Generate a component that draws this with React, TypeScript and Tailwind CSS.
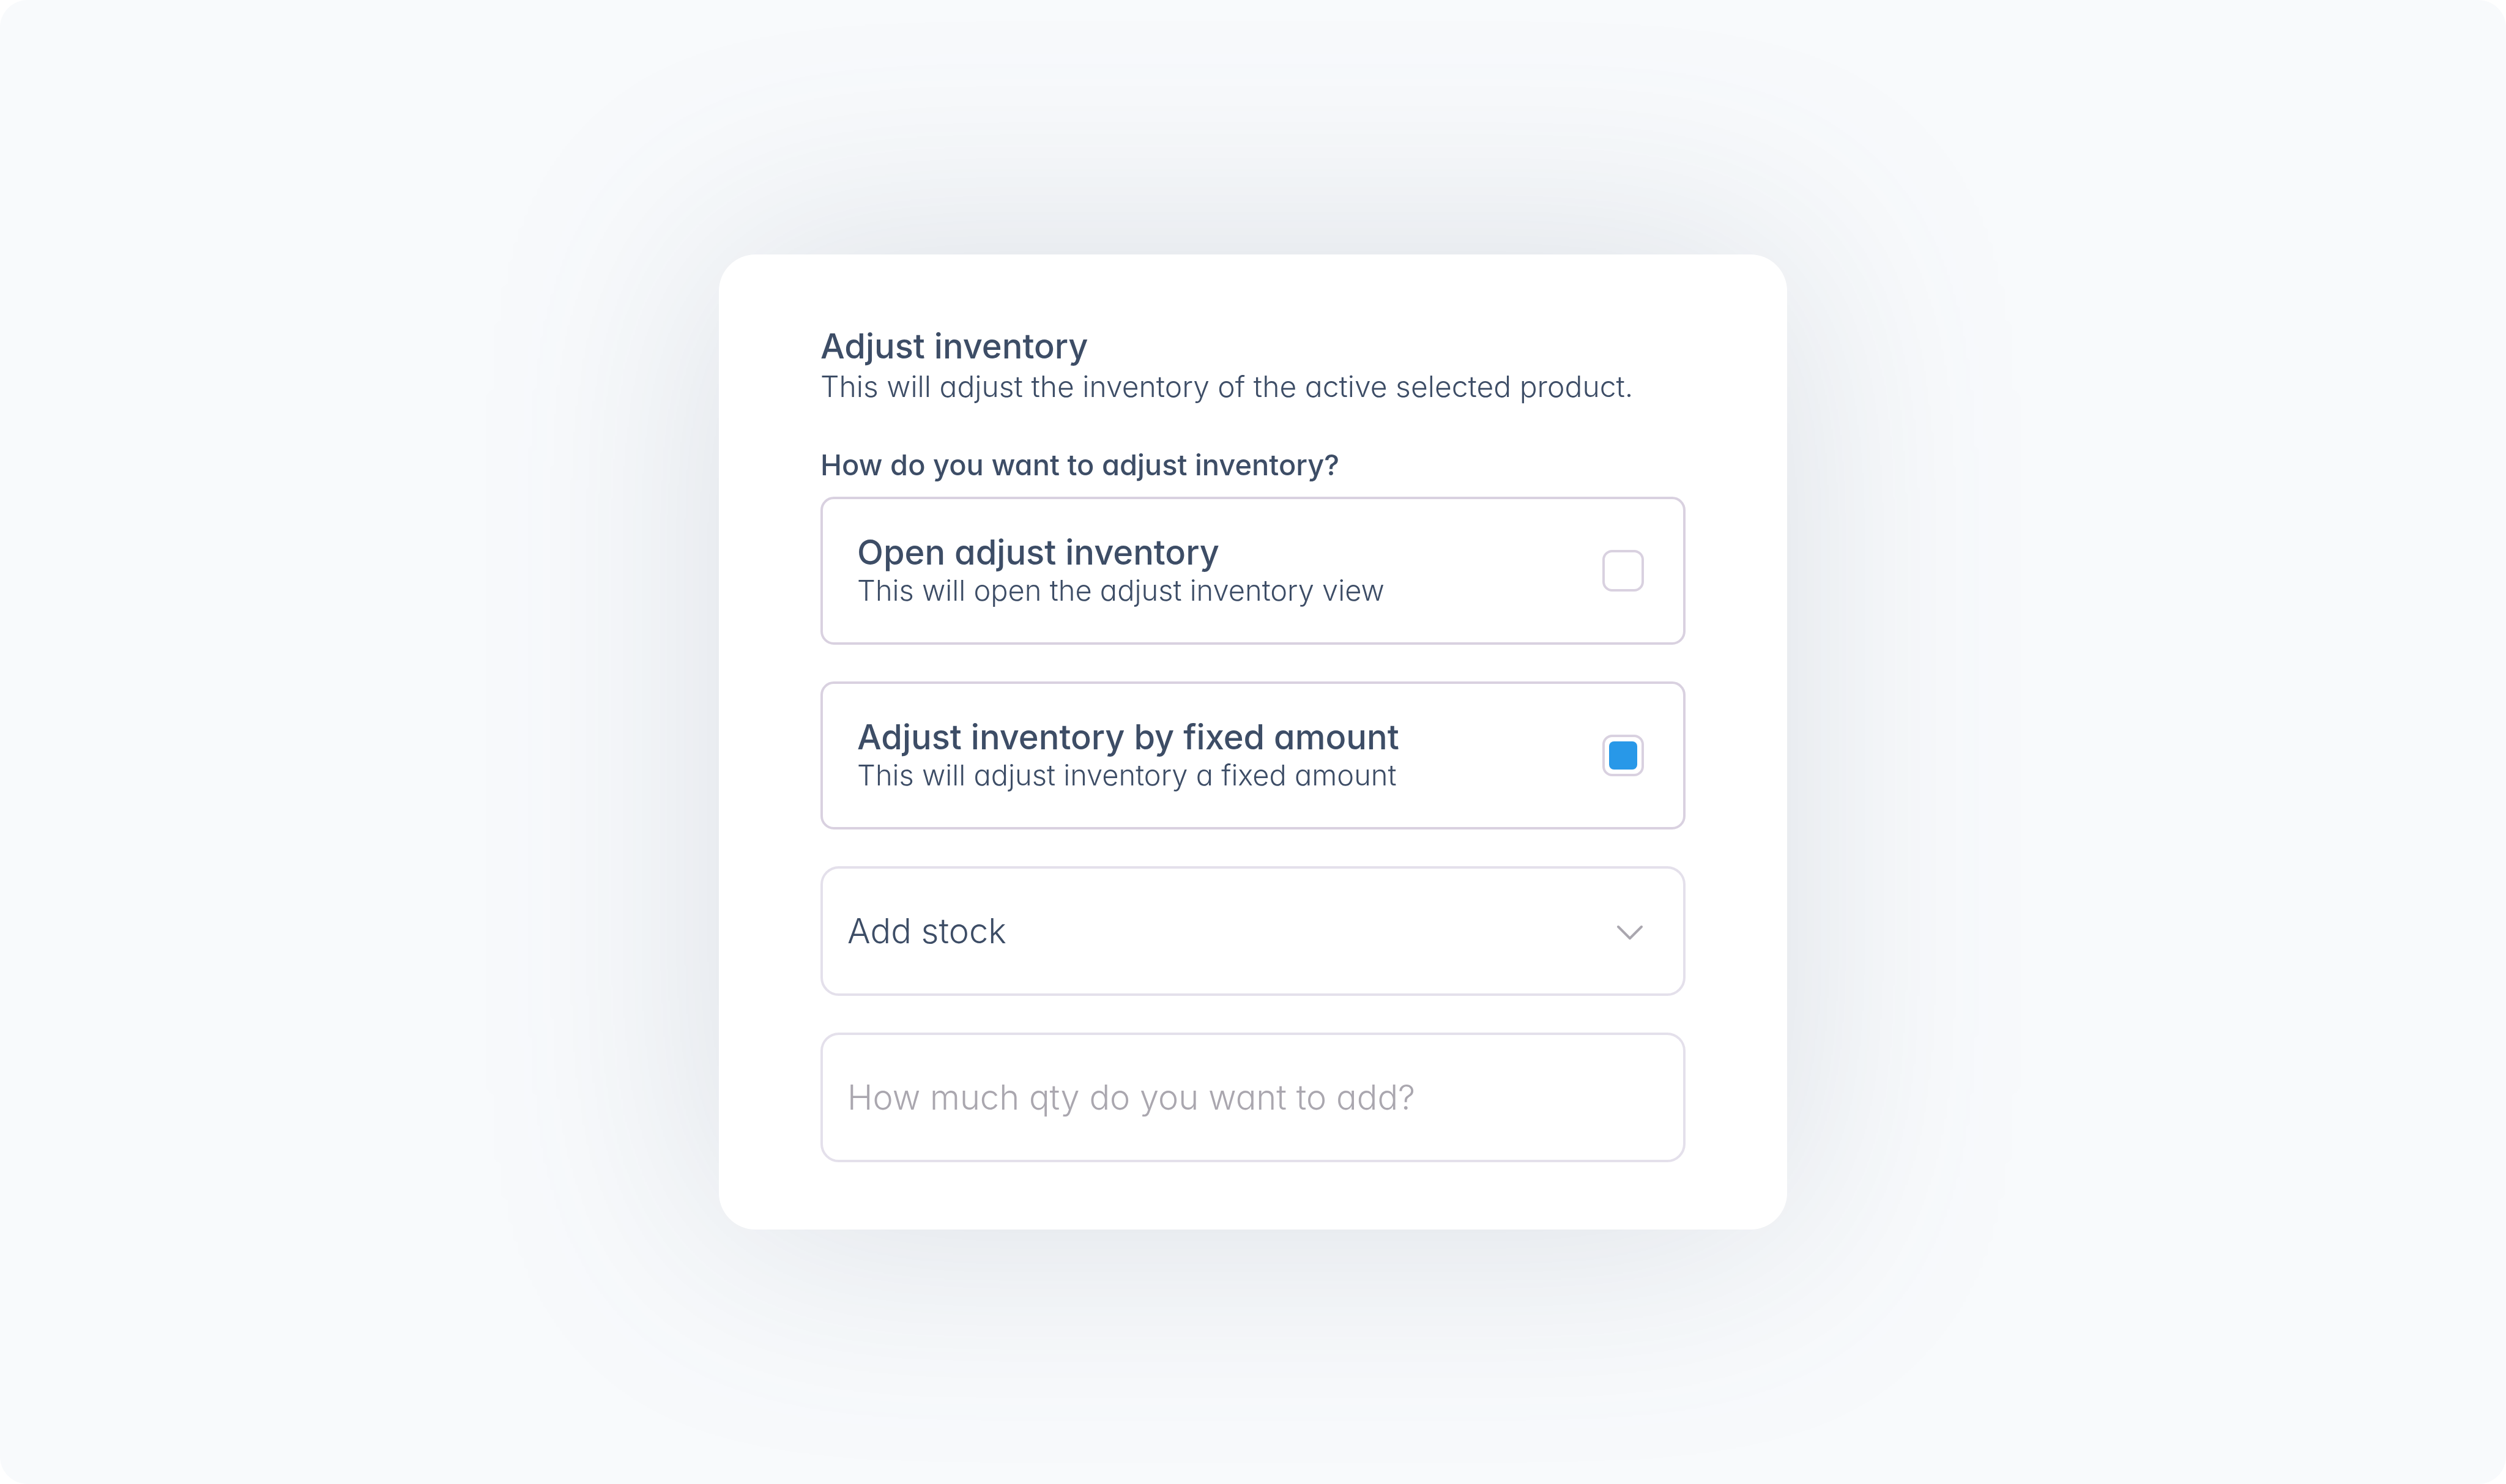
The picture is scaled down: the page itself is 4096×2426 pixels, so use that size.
import { useState } from 'react'

interface Option {
  id: string
  title: string
  description: string
}

const options: Option[] = [
  {
    id: 'open',
    title: 'Open adjust inventory',
    description: 'This will open the adjust inventory view',
  },
  {
    id: 'fixed',
    title: 'Adjust inventory by fixed amount',
    description: 'This will adjust inventory a fixed amount',
  },
]

interface OptionCardProps {
  option: Option
  checked: boolean
  onSelect: () => void
}

function OptionCard({ option, checked, onSelect }: OptionCardProps) {
  return (
    <label
      htmlFor={option.id}
      className="flex h-[242px] cursor-pointer items-center justify-between rounded-[22px] border-4 border-[#d9d1e0] pr-16 pl-14"
    >
      <span className="flex flex-col">
        <span className="text-[56px] leading-[64px] font-medium">{option.title}</span>
        <span className="text-[47px] leading-[60px] font-light">{option.description}</span>
      </span>
      <input
        id={option.id}
        type="checkbox"
        checked={checked}
        onChange={onSelect}
        className="grid size-[68px] shrink-0 appearance-none place-content-center rounded-2xl border-4 border-[#d9d1e0] checked:before:size-[46px] checked:before:rounded-lg checked:before:bg-[#2898e8] checked:before:content-['']"
      />
    </label>
  )
}

export default function App() {
  const [selected, setSelected] = useState('fixed')
  const [quantity, setQuantity] = useState('')

  return (
    <div className="bg-white font-['Inter',sans-serif] text-[#3d4d66] [font-feature-settings:'cv11']">
      <main className="flex min-h-screen items-center justify-center overflow-hidden rounded-[45px] bg-[#f8fafc]">
        <form className="w-full max-w-[1746px] rounded-[60px] bg-white px-[166px] pt-[120px] pb-[110px] drop-shadow-[0_0_190px_rgba(60,77,102,0.15)]">
          <h1 className="text-[56px] leading-[60px] font-medium">Adjust inventory</h1>
          <p className="mt-1 text-[48px] leading-[64px] font-light whitespace-nowrap">
            This will adjust the inventory of the active selected product.
          </p>

          <fieldset className="mt-17">
            <legend className="mb-6 text-[47px] leading-[56px] font-medium">
              How do you want to adjust inventory?
            </legend>
            <div className="flex flex-col gap-15">
              {options.map((option) => (
                <OptionCard
                  key={option.id}
                  option={option}
                  checked={selected === option.id}
                  onSelect={() => setSelected(option.id)}
                />
              ))}
            </div>
          </fieldset>

          <div className="relative mt-15">
            <select
              aria-label="Stock action"
              className="block h-[212px] w-full appearance-none rounded-[30px] border-4 border-[#e4e0eb] bg-white px-10 text-[56px] font-light"
            >
              <option>Add stock</option>
            </select>
            <svg
              viewBox="0 0 48 48"
              fill="none"
              className="pointer-events-none absolute top-1/2 right-[67px] size-12 -translate-y-1/2"
            >
              <path
                d="M5 17L24 36L43 17"
                stroke="#aaa7af"
                strokeWidth="4"
                strokeLinecap="round"
                strokeLinejoin="round"
              />
            </svg>
          </div>

          <input
            type="text"
            aria-label="Quantity"
            value={quantity}
            onChange={(e) => setQuantity(e.target.value)}
            placeholder="How much qty do you want to add?"
            className="mt-15 block h-[212px] w-full rounded-[30px] border-4 border-[#e4e0eb] px-10 text-[56px] font-light placeholder:text-[#aaa7af]"
          />
        </form>
      </main>
    </div>
  )
}
